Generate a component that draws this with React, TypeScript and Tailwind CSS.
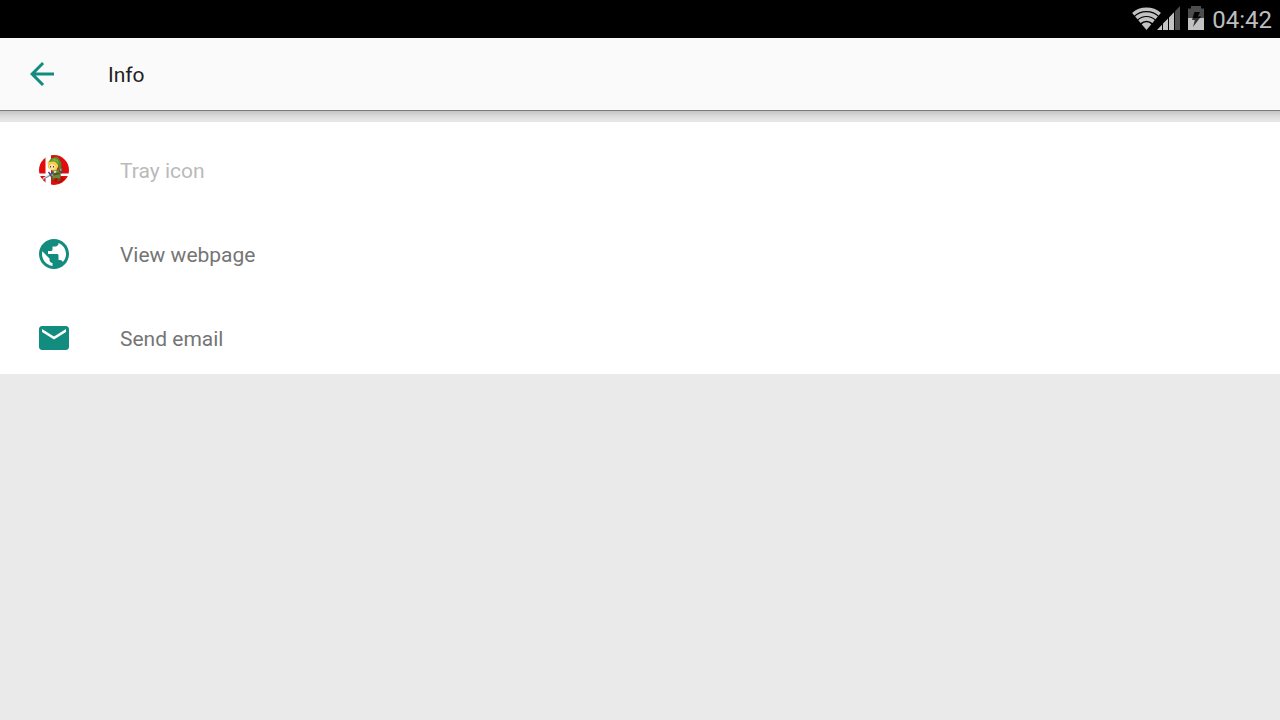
import type { ReactNode } from "react";
import { MdArrowBack, MdEmail, MdPublic } from "react-icons/md";

function WifiIcon() {
  return (
    <svg width="29" height="23" viewBox="0 0 29 23" aria-hidden="true">
      <defs>
        <clipPath id="wifi-fan">
          <path d="M14.5 23 L-1 4.5 V-2 H30 V4.5 Z" />
        </clipPath>
      </defs>
      <g clipPath="url(#wifi-fan)" fill="none" stroke="#c2c2c2" strokeWidth="3.6">
        <circle cx="14.5" cy="22.5" r="20.2" />
        <circle cx="14.5" cy="22.5" r="15.4" />
        <circle cx="14.5" cy="22.5" r="10.6" />
        <circle cx="14.5" cy="22.5" r="3.6" strokeWidth="7.2" />
      </g>
    </svg>
  );
}

function SignalIcon() {
  return (
    <svg width="23" height="24" viewBox="0 0 23 24" aria-hidden="true">
      <path d="M0 24 L5 18.8 V24 Z M6 24 V17.6 L11 12.4 V24 Z M12 24 V11.4 L17 6.2 V24 Z" fill="#c2c2c2" />
      <path d="M18 24 V5.2 L23 0 V24 Z" fill="#4d4d4d" />
    </svg>
  );
}

function BatteryIcon() {
  return (
    <svg width="16" height="24" viewBox="0 0 16 24" aria-hidden="true">
      <path d="M0 2.5 H3 V0 H13 V2.5 H16 V12 H0 Z" fill="#4d4d4d" />
      <path d="M0 12 H16 V24 H0 Z" fill="#c2c2c2" />
      <path d="M6.5 6 H12 L9.8 10.5 H13 L5 21 L6.8 14 H4 Z" fill="#333333" />
      <path d="M6.5 6 H12 L9.8 10.5 H13 L12 12 H4.6 Z" fill="#050505" />
    </svg>
  );
}

function TrayIcon() {
  return (
    <svg width="30" height="30" viewBox="0 0 30 30" aria-hidden="true">
      <circle cx="15" cy="15" r="15" fill="#e20c0c" />
      <path d="M6.5 0 H12 V30 H6.5 Z M0 18.5 H30 V21 H0 Z" fill="#ffffff" />
      <path d="M20 21 L26 24 L21 28 L14 26 Z" fill="#b80a0a" />
      {/* boots and tunic */}
      <path d="M12.5 23 L15 22.5 L15.5 25 L12 26 Z M18.5 23 L21.5 22.5 L21.5 26 L18 26.5 Z" fill="#7a4a22" />
      <path d="M14 15.5 L19.5 14.5 L22 20 L21 23.5 L17 23 L13.5 23.5 L13 18 Z" fill="#5f8f3c" />
      <path d="M14.5 18.5 L20.5 17.5 L21 19.2 L14.5 20.5 Z" fill="#6b4526" />
      <path d="M15.5 15.5 L17.5 16 L16.5 18 L14.5 17.5 Z" fill="#e5e2c0" />
      <path d="M20 10 L23 12 L24 17 L22 19 L19.5 14 Z" fill="#5e4c42" />
      <path d="M20.5 13 L22.5 13.5 L22.5 16 L21 16 Z" fill="#9a9e8c" />
      {/* hair and face */}
      <path d="M8.5 7 L13 5 L18 6.5 L19.5 11 L17.5 15 L13 15.5 L9 13 Z" fill="#f5cf3c" />
      <path d="M10 10.5 L13.5 8.5 L17 11 L15.5 14.5 L12.5 15 L10 13 Z" fill="#fcdcb0" />
      <path d="M11 11 H12 V12.6 H11 Z M14 11 H15 V12.6 H14 Z" fill="#5c4630" />
      {/* cap */}
      <path d="M9.5 7 L12 3.5 L16 2 L19 2 L22.5 8 L22 13 L20 15 L19 9.5 L16 6.5 L12.5 6.5 Z" fill="#4f8a2e" />
      <path d="M11.5 5.5 L15.5 3 L19 5 L20 9 L16.5 6 Z" fill="#79ab3f" />
      {/* sword */}
      <path d="M2.8 25.2 L4 22.7 L11.5 18.5 L13 20.5 Z" fill="#d3dbea" />
      <path d="M4 24.5 L12.5 19.5" stroke="#7b87a4" strokeWidth="1" />
      <path d="M9.5 16.8 L12.5 21.5 M11.5 19.2 L14.5 17.5" stroke="#3b4c78" strokeWidth="1.4" />
    </svg>
  );
}

type RowProps = {
  icon: ReactNode;
  label: string;
  disabled?: boolean;
};

function InfoRow({ icon, label, disabled }: RowProps) {
  return (
    <li className="pt-3">
      <button
        type="button"
        disabled={disabled}
        className="flex h-[72px] w-full items-center px-9 text-left text-[21px] text-[#757575] disabled:text-[#bababa]"
      >
        <span className="mr-12 flex size-9 shrink-0 items-center justify-center text-[#128c7e]">{icon}</span>
        <span className="pt-1">{label}</span>
      </button>
    </li>
  );
}

export default function App() {
  return (
    <div className="min-h-screen bg-[#eaeaea] font-['Roboto',sans-serif]">
      <div className="flex h-[38px] items-start justify-end bg-black pr-2 pt-[6px] text-2xl leading-7 text-[#bebebe]">
        <div className="mr-2 flex items-end">
          <WifiIcon />
          <div className="-ml-1">
            <SignalIcon />
          </div>
        </div>
        <div className="mr-2">
          <BatteryIcon />
        </div>
        <time>04:42</time>
      </div>

      <header className="flex h-[73px] items-center border-b border-[#7b7b7b] bg-[#fafafa] px-6">
        <button type="button" aria-label="Back" className="mr-12 text-[#128c7e]">
          <MdArrowBack size={36} />
        </button>
        <h1 className="pt-1 text-[21px] text-[#212121]">Info</h1>
      </header>
      <div className="h-[11px] bg-linear-to-b from-[#c4c4c4] via-[#dcdcdc] to-[#e8e8e8]" />

      <ul className="bg-white">
        <InfoRow icon={<TrayIcon />} label="Tray icon" disabled />
        <InfoRow icon={<MdPublic size={36} />} label="View webpage" />
        <InfoRow icon={<MdEmail size={36} />} label="Send email" />
      </ul>
    </div>
  );
}
